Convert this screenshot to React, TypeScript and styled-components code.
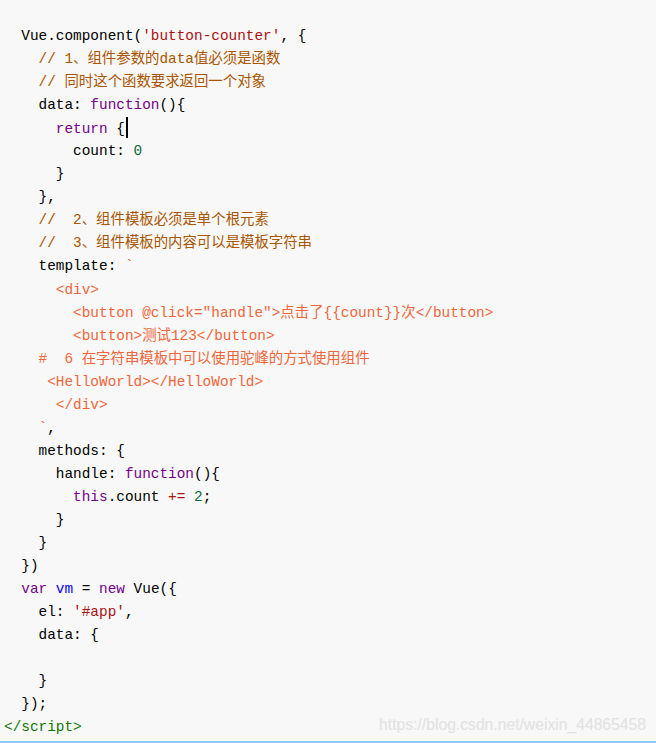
import React from "react";
import styled, { createGlobalStyle } from "styled-components";

const GlobalStyle = createGlobalStyle`
  html, body {
    margin: 0;
    padding: 0;
    background: #f8f8f8;
  }
  #root {
    width: 656px;
  }
`;

type Kind = "plain" | "str" | "com" | "kw" | "num" | "def" | "op" | "tpl" | "tag" | "cursor";

const colors: Record<Kind, string> = {
  plain: "#000000",
  str: "#aa1111",
  com: "#aa5500",
  kw: "#770088",
  num: "#116644",
  def: "#0000ff",
  op: "#aa1111",
  tpl: "#f0663a",
  tag: "#117700",
  cursor: "#000000",
};

const Page = styled.div`
  position: relative;
  width: 656px;
  height: 743px;
  box-sizing: border-box;
  background: #f8f8f8;
  border-bottom: 2px solid #86cff5;
  overflow: hidden;
`;

const CodeBlock = styled.pre`
  margin: 0;
  padding: 25px 0 0 4px;
  font-family: "Liberation Mono", "Noto Sans CJK SC", monospace;
  font-size: 14.4px;
  line-height: 23.06px;
  white-space: pre;
`;

const Line = styled.div`
  height: 23.06px;
`;

const Token = styled.span<{ $kind: Kind }>`
  color: ${(p) => colors[p.$kind]};
`;

const Cursor = styled.span`
  display: inline-block;
  width: 0;
  height: 21px;
  border-left: 2px solid #000;
  vertical-align: -5px;
  margin-left: 1px;
`;

const Watermark = styled.div`
  position: absolute;
  right: 10px;
  bottom: 7px;
  font-family: "Liberation Sans", Arial, sans-serif;
  font-size: 15.7px;
  color: #e3e3e3;
  text-shadow: 0 0 1px rgba(0, 0, 0, 0.04);
`;

type Tok = [Kind, string];

const lines: Tok[][] = [
  [["plain", "  Vue.component("], ["str", "'button-counter'"], ["plain", ", {"]],
  [["plain", "    "], ["com", "// 1、组件参数的data值必须是函数"]],
  [["plain", "    "], ["com", "// 同时这个函数要求返回一个对象"]],
  [["plain", "    data: "], ["kw", "function"], ["plain", "(){"]],
  [["plain", "      "], ["kw", "return"], ["plain", " {"], ["cursor", ""]],
  [["plain", "        count: "], ["num", "0"]],
  [["plain", "      }"]],
  [["plain", "    },"]],
  [["plain", "    "], ["com", "//  2、组件模板必须是单个根元素"]],
  [["plain", "    "], ["com", "//  3、组件模板的内容可以是模板字符串"]],
  [["plain", "    template: "], ["tpl", "`"]],
  [["tpl", "      <div>"]],
  [["tpl", "        <button @click=\"handle\">点击了{{count}}次</button>"]],
  [["tpl", "        <button>测试123</button>"]],
  [["tpl", "    #  6 在字符串模板中可以使用驼峰的方式使用组件"]],
  [["tpl", "     <HelloWorld></HelloWorld>"]],
  [["tpl", "      </div>"]],
  [["tpl", "    `"], ["plain", ","]],
  [["plain", "    methods: {"]],
  [["plain", "      handle: "], ["kw", "function"], ["plain", "(){"]],
  [["plain", "        "], ["kw", "this"], ["plain", ".count "], ["op", "+="], ["plain", " "], ["num", "2"], ["plain", ";"]],
  [["plain", "      }"]],
  [["plain", "    }"]],
  [["plain", "  })"]],
  [["plain", "  "], ["kw", "var"], ["plain", " "], ["def", "vm"], ["plain", " = "], ["kw", "new"], ["plain", " Vue({"]],
  [["plain", "    el: "], ["str", "'#app'"], ["plain", ","]],
  [["plain", "    data: {"]],
  [["plain", ""]],
  [["plain", "    }"]],
  [["plain", "  });"]],
  [["tag", "</script>"]],
];

export default function App() {
  return (
    <>
      <GlobalStyle />
      <Page>
        <CodeBlock>
          {lines.map((toks, i) => (
            <Line key={i}>
              {toks.map(([kind, text], j) =>
                kind === "cursor" ? (
                  <Cursor key={j} />
                ) : (
                  <Token key={j} $kind={kind}>
                    {text}
                  </Token>
                )
              )}
            </Line>
          ))}
        </CodeBlock>
        <Watermark>https://blog.csdn.net/weixin_44865458</Watermark>
      </Page>
    </>
  );
}
